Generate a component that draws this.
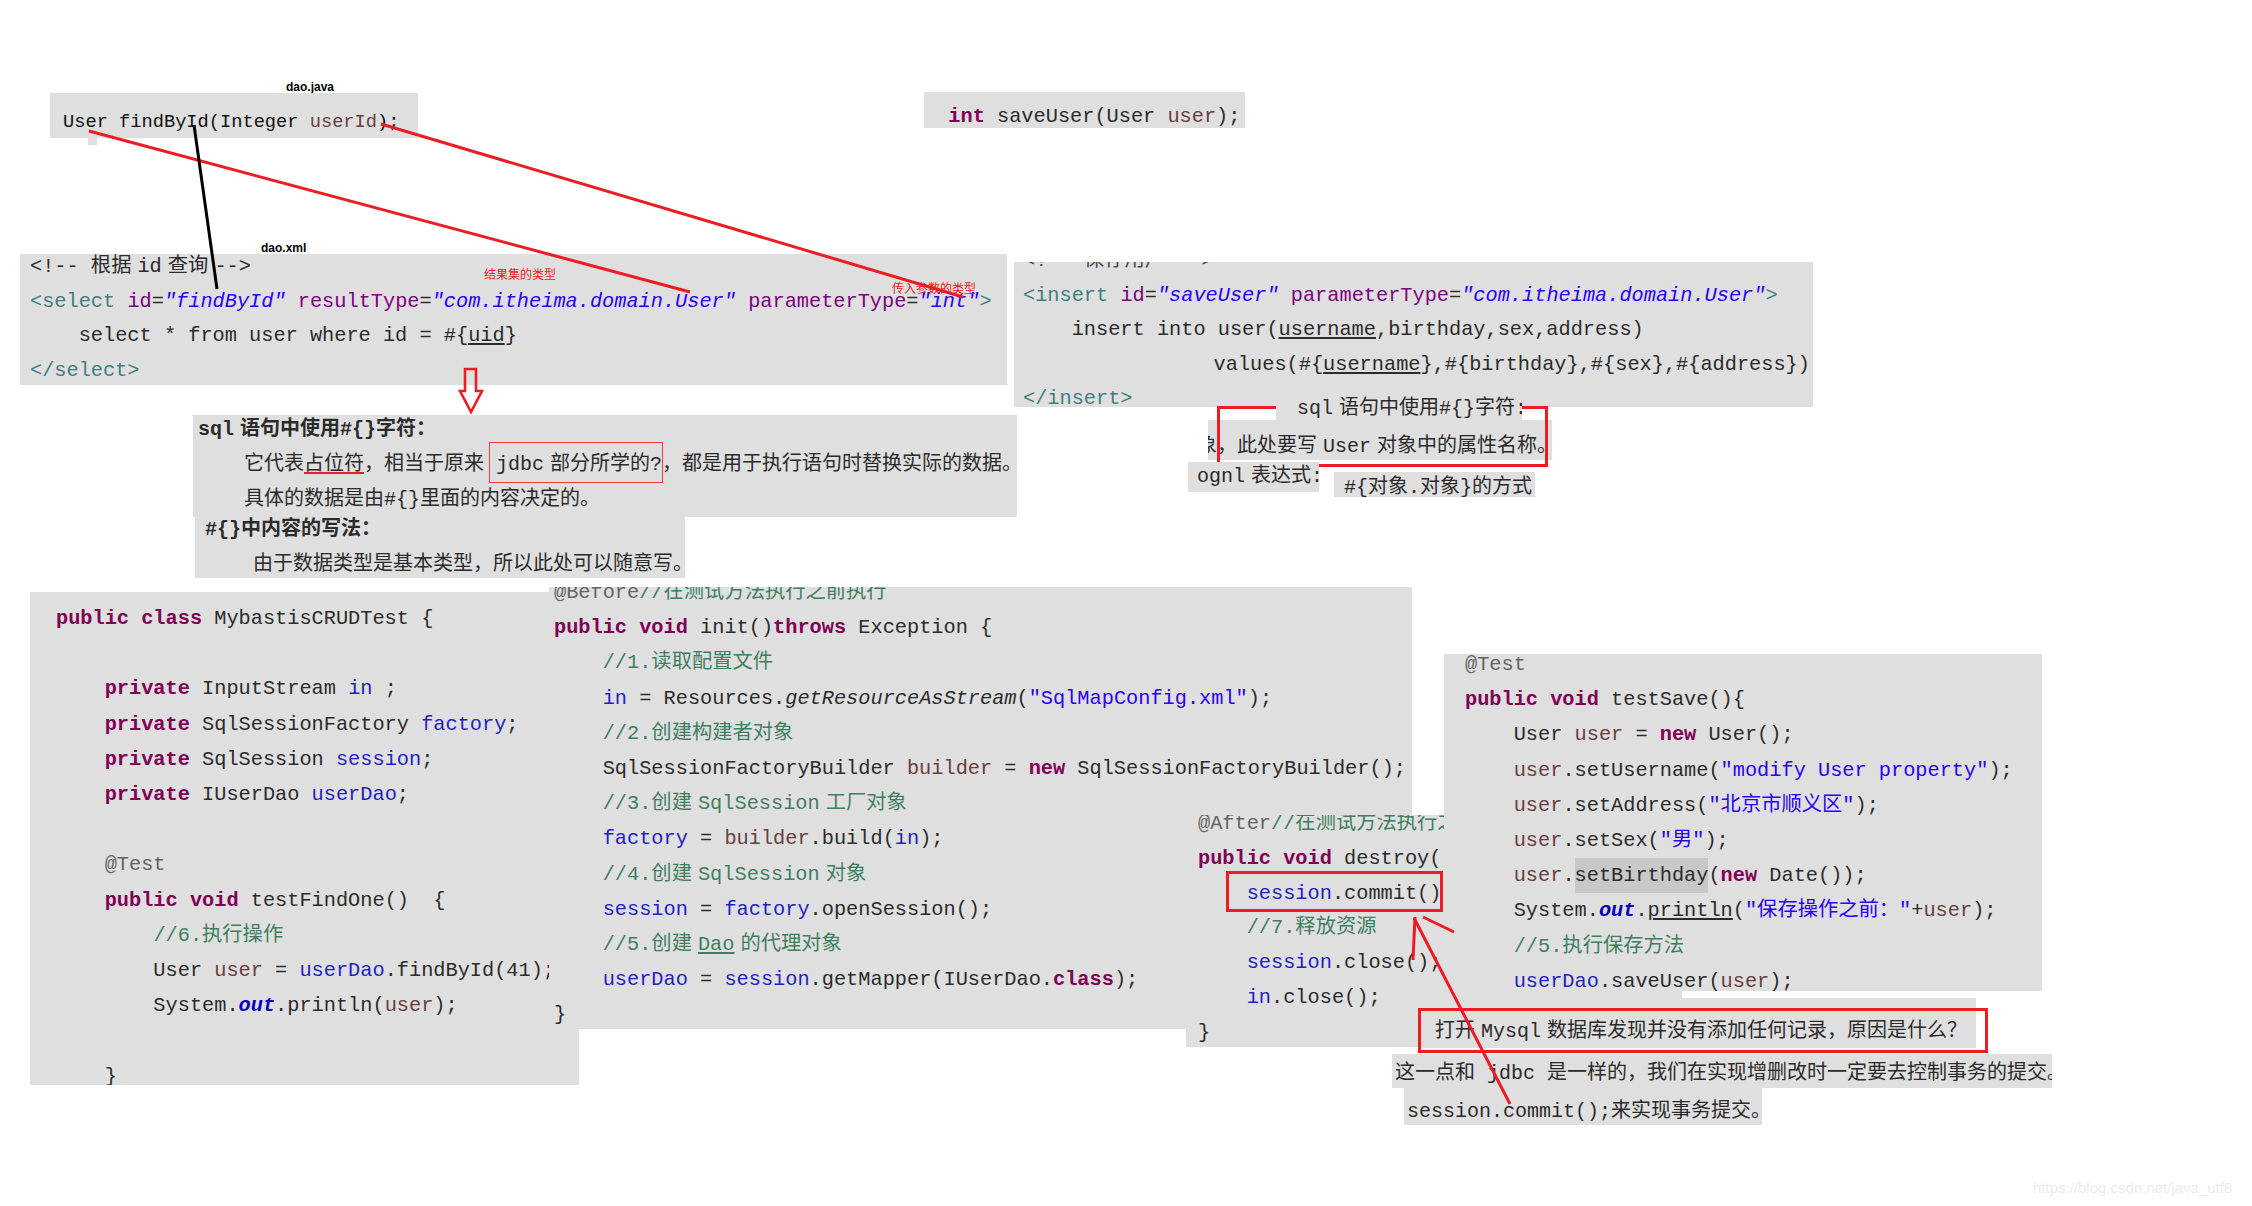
<script>
  // snippets pasted on a blank page, annotated with red lines
</script>

<main class="canvas">
  <div class="label dao-java">dao.java</div>
  <div class="nub"></div>
  <div class="panel p-find"><pre class="small">User findById(Integer <span class="f">userId</span>);</pre></div>
  <div class="panel p-save"><pre>  <span class="k">int</span> saveUser(User <span class="f">user</span>);</pre></div>

  <div class="label dao-xml">dao.xml</div>
  <div class="panel p-select"><pre>&lt;!-- 根据<span class="th">&nbsp;</span>id<span class="th">&nbsp;</span>查询<span class="th">&nbsp;</span>--&gt;
<span class="t">&lt;select</span> <span class="a">id</span>=<span class="s">"findById"</span> <span class="a">resultType</span>=<span class="s">"com.itheima.domain.User"</span> <span class="a">parameterType</span>=<span class="s">"int"</span><span class="t">&gt;</span>
    select * from user where id = #&#123;<u>uid</u>&#125;
<span class="t">&lt;/select&gt;</span></pre></div>
  <div class="note n-result">结果集的类型</div>
  <div class="note n-param">传入参数的类型</div>

  <div class="panel p-insert"><pre><span class="dim">&lt;!-- 保存用户 --&gt;</span>
<span class="t">&lt;insert</span> <span class="a">id</span>=<span class="s">"saveUser"</span> <span class="a">parameterType</span>=<span class="s">"com.itheima.domain.User"</span><span class="t">&gt;</span>
    insert into user(<u>username</u>,birthday,sex,address)
               <span class="vals">values(#&#123;<u>username</u>&#125;,#&#123;birthday&#125;,#&#123;sex&#125;,#&#123;address&#125;)</span>
<span class="t">&lt;/insert&gt;</span></pre></div>
  <div class="panel p-attr"><p class="prose">象，此处要写<span class="th">&nbsp;</span>User<span class="th">&nbsp;</span>对象中的属性名称。</p></div>
  <div class="red-open"></div>
  <div class="panel p-tab"><p class="prose">sql<span class="th">&nbsp;</span>语句中使用#&#123;&#125;字符:</p></div>
  <div class="panel p-ognl"><p class="prose">ognl<span class="th">&nbsp;</span>表达式:</p></div>
  <div class="panel p-way"><p class="prose">#&#123;对象.对象&#125;的方式</p></div>

  <div class="panel p-sql">
    <p class="prose"><b>sql<span class="th">&nbsp;</span>语句中使用#&#123;&#125;字符：</b></p>
    <p class="prose in">它代表<span class="under">占位符</span>，相当于原来 <span class="boxed">jdbc<span class="th">&nbsp;</span>部分所学的?</span>，都是用于执行语句时替换实际的数据。</p>
    <p class="prose in">具体的数据是由#&#123;&#125;里面的内容决定的。</p>
  </div>
  <div class="panel p-how">
    <p class="prose"><b>#&#123;&#125;中内容的写法：</b></p>
    <p class="prose in">由于数据类型是基本类型，所以此处可以随意写。</p>
  </div>

  <div class="panel p-class"><pre><span class="k">public class</span> MybastisCRUDTest &#123;

    <span class="k">private</span> InputStream <span class="v">in</span> ;
    <span class="k">private</span> SqlSessionFactory <span class="v">factory</span>;
    <span class="k">private</span> SqlSession <span class="v">session</span>;
    <span class="k">private</span> IUserDao <span class="v">userDao</span>;

    <span class="n">@Test</span>
    <span class="k">public void</span> testFindOne()  &#123;
        <span class="c">//6.执行操作</span>
        User <span class="f">user</span> = <span class="v">userDao</span>.findById(41);
        System.<span class="st">out</span>.println(<span class="f">user</span>);

    &#125;</pre></div>

  <div class="panel p-before"><pre><span class="n">@Before</span><span class="c">//在测试方法执行之前执行</span>
<span class="k">public void</span> init()<span class="k">throws</span> Exception &#123;
    <span class="c">//1.读取配置文件</span>
    <span class="v">in</span> = Resources.<i>getResourceAsStream</i>(<span class="str">"SqlMapConfig.xml"</span>);
    <span class="c">//2.创建构建者对象</span>
    SqlSessionFactoryBuilder <span class="f">builder</span> = <span class="k">new</span> SqlSessionFactoryBuilder();
    <span class="c">//3.创建<span class="th">&nbsp;</span>SqlSession<span class="th">&nbsp;</span>工厂对象</span>
    <span class="v">factory</span> = <span class="f">builder</span>.build(<span class="v">in</span>);
    <span class="c">//4.创建<span class="th">&nbsp;</span>SqlSession<span class="th">&nbsp;</span>对象</span>
    <span class="v">session</span> = <span class="v">factory</span>.openSession();
    <span class="c">//5.创建<span class="th">&nbsp;</span><u>Dao</u><span class="th">&nbsp;</span>的代理对象</span>
    <span class="v">userDao</span> = <span class="v">session</span>.getMapper(IUserDao.<span class="k">class</span>);
&#125;</pre></div>

  <div class="panel p-after"><pre><span class="n">@After</span><span class="c">//在测试方法执行之后执行</span>
<span class="k">public void</span> destroy() throws Exception &#123;
    <span class="v">session</span>.commit();
    <span class="c">//7.释放资源</span>
    <span class="v">session</span>.close();
    <span class="v">in</span>.close();     .
&#125;</pre></div>

  <div class="panel p-save-test"><pre><span class="n">@Test</span>
<span class="k">public void</span> testSave()&#123;
    User <span class="f">user</span> = <span class="k">new</span> User();
    <span class="f">user</span>.setUsername(<span class="str">"modify User property"</span>);
    <span class="f">user</span>.setAddress(<span class="str">"北京市顺义区"</span>);
    <span class="f">user</span>.setSex(<span class="str">"男"</span>);
    <span class="f">user</span>.<span class="hl">setBirthday</span>(<span class="k">new</span> Date());
    System.<span class="st">out</span>.<u>println</u>(<span class="str">"保存操作之前："</span>+<span class="f">user</span>);
    <span class="c">//5.执行保存方法</span>
    <span class="v">userDao</span>.saveUser(<span class="f">user</span>);</pre></div>
  <div class="red-commit"></div>

  <div class="panel p-ask"><p class="prose">打开<span class="th">&nbsp;</span>Mysql<span class="th">&nbsp;</span>数据库发现并没有添加任何记录，原因是什么？</p></div>
  <div class="red-ask"></div>
  <div class="panel p-same"><p class="prose">这一点和 jdbc 是一样的，我们在实现增删改时一定要去控制事务的提交。</p></div>
  <div class="panel p-commit"><p class="prose">session.commit();来实现事务提交。</p></div>

  <svg class="ink" width="2252" height="1206" viewBox="0 0 2252 1206" fill="none">
    <g stroke="#ed1c24" stroke-width="3">
      <line x1="89" y1="131" x2="690" y2="292" />
      <line x1="381" y1="124" x2="963" y2="297" />
      <path d="M465 369H476V391H482L471 412L460 391H465Z" stroke-width="2.6" />
      <line x1="1414" y1="918" x2="1510" y2="1104" />
      <line x1="1415" y1="917" x2="1413" y2="960" />
      <line x1="1423" y1="917" x2="1454" y2="932" />
    </g>
    <line x1="194" y1="125" x2="217" y2="289" stroke="#000" stroke-width="3" />
  </svg>

  <div class="mark">https://blog.csdn.net/java_utf8</div>
</main>

<style>
  :global(body) {
    margin: 0;
    background: #fff;
  }

  .canvas {
    position: relative;
    width: 2252px;
    height: 1206px;
    overflow: hidden;
    font-family: "Liberation Mono", "Noto Sans CJK SC", monospace;
    color: #2b2b2b;
  }

  .panel {
    position: absolute;
    overflow: hidden;
    background: #dfdfdf;
    box-sizing: border-box;
  }

  pre {
    margin: 0;
    font: inherit;
    font-size: 20.3px;
    line-height: 35.2px;
  }

  pre.small {
    font-size: 18.7px;
    line-height: 30px;
    color: #111;
  }

  .prose {
    margin: 0;
    font-size: 20px;
    line-height: 35px;
    white-space: nowrap;
  }

  .prose.in {
    padding-left: 46px;
  }

  .th { font-size: 10px; line-height: 0; }
  .vals { margin-left: 8px; }

  .k { color: #7f0055; font-weight: 700; }
  .f { color: #6a3e3e; }
  .v { color: #1f1fc4; }
  .n { color: #646464; }
  .c { color: #3f7f5f; }
  .st { color: #0000c0; font-weight: 700; font-style: italic; }
  .str { color: #2a00ff; }
  .t { color: #3f7f7f; }
  .a { color: #7f007f; }
  .s { color: #2a00ff; font-style: italic; }
  .hl { background: #c8c8c8; padding: 6px 0; }
  .dim { color: #444; }

  .p-find { left: 50px; top: 93px; width: 368px; height: 45px; padding: 14px 0 0 13px; }
  .nub { position: absolute; left: 88px; top: 136px; width: 9px; height: 9px; background: #dfdfdf; }
  .p-save { left: 924px; top: 92px; width: 321px; height: 36px; }
  .p-save pre { line-height: 30px; margin-top: 10px; }

  .p-select { left: 20px; top: 254px; width: 987px; height: 131px; padding-left: 10px; }
  .p-select pre { line-height: 34.6px; margin-top: -4px; }
  .p-insert { left: 1014px; top: 262px; width: 799px; height: 145px; padding-left: 9px; }
  .p-insert pre { line-height: 34.6px; margin-top: -18px; }

  .p-attr { left: 1208px; top: 420px; width: 344px; height: 40px; }
  .p-attr .prose { margin: 9px 0 0 -11px; }
  .p-tab { left: 1276px; top: 390px; width: 246px; height: 30px; padding-left: 21px; }
  .p-tab .prose { margin-top: 1px; }
  .p-ognl { left: 1188px; top: 462px; width: 131px; height: 30px; padding-left: 9px; }
  .p-ognl .prose { margin-top: -3px; }
  .p-way { left: 1334px; top: 472px; width: 201px; height: 25px; padding-left: 10px; }
  .p-way .prose { margin-top: -2px; }

  .p-sql { left: 193px; top: 415px; width: 824px; height: 102px; padding-left: 5px; }
  .p-sql .prose:first-child { margin-top: -3px; }
  .p-how { left: 195px; top: 517px; width: 490px; height: 61px; padding-left: 10px; }
  .p-how .prose:first-child { margin-top: -5px; }
  .p-how .in { padding-left: 48px; }

  .under { text-decoration: underline #ed1c24 2px; text-underline-offset: 2px; }
  .boxed { position: relative; }
  .boxed::after {
    content: "";
    position: absolute;
    left: -7px;
    right: -1px;
    top: -11px;
    bottom: -7px;
    border: 1.5px solid #f03c3c;
  }

  .p-class { left: 30px; top: 592px; width: 549px; height: 493px; padding-left: 26px; }
  .p-class pre { margin-top: 9px; }
  .p-before { left: 549px; top: 587px; width: 863px; height: 442px; padding-left: 5px; }
  .p-before pre { margin-top: -12px; }
  .p-after { left: 1186px; top: 815px; width: 496px; height: 232px; padding-left: 12px; }
  .p-after pre { line-height: 34.8px; margin-top: -8px; }
  .p-save-test { left: 1444px; top: 654px; width: 598px; height: 337px; padding-left: 21px; }
  .p-save-test pre { margin-top: -7px; }

  .red-commit {
    position: absolute;
    left: 1226px;
    top: 871px;
    width: 217px;
    height: 41px;
    box-sizing: border-box;
    border: 3px solid #ed1c24;
  }

  .red-open {
    position: absolute;
    left: 1217px;
    top: 406px;
    width: 331px;
    height: 61px;
    box-sizing: border-box;
    border: 3px solid #ed1c24;
  }

  .p-ask { left: 1418px; top: 998px; width: 558px; height: 50px; padding-left: 17px; }
  .p-ask .prose { margin-top: 16px; }
  .red-ask {
    position: absolute;
    left: 1418px;
    top: 1008px;
    width: 570px;
    height: 45px;
    box-sizing: border-box;
    border: 3px solid #ed1c24;
  }
  .p-same { left: 1392px; top: 1054px; width: 660px; height: 34px; padding-left: 3px; }
  .p-same .prose { margin-top: 2px; }
  .p-commit { left: 1404px; top: 1088px; width: 358px; height: 37px; padding-left: 3px; }
  .p-commit .prose { margin-top: 6px; }

  .label {
    position: absolute;
    font-family: "Liberation Sans", sans-serif;
    font-weight: 700;
    font-size: 12px;
    line-height: 12px;
    color: #000;
  }
  .dao-java { left: 286px; top: 81px; }
  .dao-xml { left: 261px; top: 242px; }

  .note {
    position: absolute;
    font-family: "Noto Sans CJK SC", sans-serif;
    font-size: 12px;
    line-height: 14px;
    color: #ed1c24;
  }
  .n-result { left: 484px; top: 267px; }
  .n-param { left: 892px; top: 281px; }

  .ink {
    position: absolute;
    left: 0;
    top: 0;
    pointer-events: none;
  }

  .mark {
    position: absolute;
    left: 2033px;
    top: 1178px;
    font-family: "Liberation Sans", sans-serif;
    font-size: 15px;
    line-height: 20px;
    color: #ececec;
  }
</style>
